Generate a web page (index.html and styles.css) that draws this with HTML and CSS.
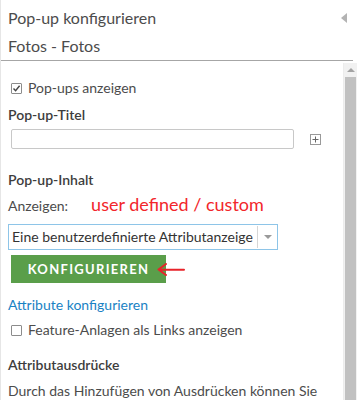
FILE: index.html
```html
<!DOCTYPE html>
<html lang="de">

<head>
    <meta charset="UTF-8">
    <meta name="viewport" content="width=device-width, initial-scale=1.0">
    <title>Pop-up konfigurieren</title>
    <link rel="stylesheet" href="styles.css">
</head>

<body>
    <div class="panel">
        <div class="head">
            <div class="head-row">
                <span class="head-title">Pop-up konfigurieren</span>
                <span class="collapse"></span>
            </div>
            <div class="layer-name">Fotos - Fotos</div>
        </div>
        <div class="body">
            <div class="content">
                <label class="check-row row-show">
                    <span class="box">
                        <svg width="9" height="9" viewBox="0 0 9 9"><path d="M1.5 4.6 L3.6 6.8 L7.6 1.8" fill="none" stroke="#444" stroke-width="1.4"/></svg>
                    </span>
                    Pop-ups anzeigen
                </label>

                <h3 class="section sec-title">Pop-up-Titel</h3>
                <div class="title-row">
                    <div class="text-input"></div>
                    <span class="plus">
                        <svg width="11" height="11" viewBox="0 0 11 11"><rect x="0.5" y="0.5" width="10" height="10" fill="#fff" stroke="#999"/><path d="M5.5 2.5 V8.5 M2.5 5.5 H8.5" stroke="#666" stroke-width="1"/></svg>
                    </span>
                </div>

                <h3 class="section sec-content">Pop-up-Inhalt</h3>
                <div class="show-row">
                    <span class="show-label">Anzeigen:</span>
                    <span class="note">user defined / custom</span>
                </div>
                <div class="select">
                    <span class="select-text">Eine benutzerdefinierte Attributanzeige</span>
                    <span class="select-arrow"></span>
                </div>
                <div class="btn-row">
                    <button class="btn-config" type="button">KONFIGURIEREN</button>
                    <svg class="red-arrow" width="28" height="13" viewBox="0 0 28 13"><path d="M9 1 L1.5 6.5 L9 12 M2 6.8 H27" fill="none" stroke="#e8232a" stroke-width="2" stroke-linecap="round" stroke-linejoin="round"/></svg>
                </div>

                <a class="link" href="#">Attribute konfigurieren</a>
                <label class="check-row row-links">
                    <span class="box"></span>
                    Feature-Anlagen als Links anzeigen
                </label>

                <h3 class="section sec-expr">Attributausdrücke</h3>
                <p class="info">Durch das Hinzufügen von Ausdrücken können Sie</p>
            </div>
            <div class="scrollbar">
                <div class="sb-up"></div>
                <div class="sb-thumb"></div>
            </div>
        </div>
    </div>
</body>

</html>
```

FILE: styles.css
```css
* {
    margin: 0;
    padding: 0;
    box-sizing: border-box;
}

body {
    font-family: Lato, "Open Sans", sans-serif;
    font-size: 14px;
    line-height: 20px;
    color: #4c4c4c;
    background-color: #fff;
}

.panel {
    width: 357px;
    height: 400px;
    overflow: hidden;
    border-left: 1px solid #e6e6e6;
    display: flex;
    flex-direction: column;
}

.head {
    padding: 8px 4px 4px 7px;
    border-bottom: 1px solid #a6a6a6;
    width: 352px;
    font-size: 16px;
}

.head-row {
    display: flex;
    justify-content: space-between;
    align-items: center;
}

.collapse {
    width: 0;
    height: 0;
    border-top: 5px solid transparent;
    border-bottom: 5px solid transparent;
    border-right: 6px solid #b3b3b3;
    margin-right: 2px;
}

.layer-name {
    margin-top: 8px;
}

.body {
    flex: 1;
    display: flex;
    min-height: 0;
}

.content {
    flex: 1;
    padding: 17px 0 0 7px;
}

.scrollbar {
    width: 14px;
    margin-top: 2px;
    border-left: 1px solid #ececec;
    background-color: #f1f1f1;
    display: flex;
    flex-direction: column;
}

.sb-up {
    height: 14px;
    display: flex;
    align-items: center;
    justify-content: center;
}

.sb-up::after {
    content: "";
    border-left: 4px solid transparent;
    border-right: 4px solid transparent;
    border-bottom: 4px solid #a3a3a3;
}

.sb-thumb {
    flex: 1;
    background-color: #c1c1c1;
    margin: 0 1px 0 1px;
}

.check-row {
    display: flex;
    align-items: center;
    gap: 6px;
    padding-left: 3px;
}

.box {
    width: 11px;
    height: 11px;
    border: 1px solid #8c8c8c;
    border-radius: 1px;
    background-color: #fff;
    display: flex;
    align-items: center;
    justify-content: center;
}

.section {
    font-size: 14px;
    font-weight: 600;
    color: #3d3d3d;
}

.sec-title {
    margin-top: 7px;
}

.title-row {
    display: flex;
    align-items: center;
    margin-top: 4px;
    padding-left: 3px;
}

.text-input {
    width: 283px;
    height: 20px;
    border: 1px solid #c8c8c8;
    border-radius: 2px;
}

.plus {
    margin-left: 16px;
    display: flex;
}

.sec-content {
    margin-top: 21px;
}

.show-row {
    display: flex;
    align-items: baseline;
    gap: 23px;
    margin-top: 6px;
}

.note {
    color: #f2262b;
    font-size: 18px;
    line-height: 17px;
}

.select {
    width: 270px;
    height: 26px;
    margin-top: 8px;
    border: 1px solid #8ec5e8;
    display: flex;
    align-items: center;
}

.select-text {
    flex: 1;
    padding-left: 3px;
    color: #333;
    border-right: 1px solid #d6d6d6;
    line-height: 22px;
    white-space: nowrap;
    overflow: hidden;
}

.select-arrow {
    width: 19px;
    display: flex;
    justify-content: center;
}

.select-arrow::after {
    content: "";
    border-left: 4px solid transparent;
    border-right: 4px solid transparent;
    border-top: 4px solid #9a9a9a;
}

.btn-row {
    display: flex;
    align-items: center;
    margin-top: 5px;
    padding-left: 3px;
}

.btn-config {
    width: 155px;
    height: 28px;
    background-color: #5a9e4a;
    color: #fff;
    border-style: none;
    font-family: Lato, sans-serif;
    font-size: 13px;
    font-weight: 700;
    letter-spacing: 1.3px;
    cursor: pointer;
}

.red-arrow {
    margin-left: -9px;
}

.link {
    display: block;
    margin-top: 12px;
    color: #1a82c4;
    text-decoration: none;
}

.row-links {
    margin-top: 5px;
}

.sec-expr {
    margin-top: 15px;
}

.info {
    margin-top: 6px;
    white-space: nowrap;
}
```
